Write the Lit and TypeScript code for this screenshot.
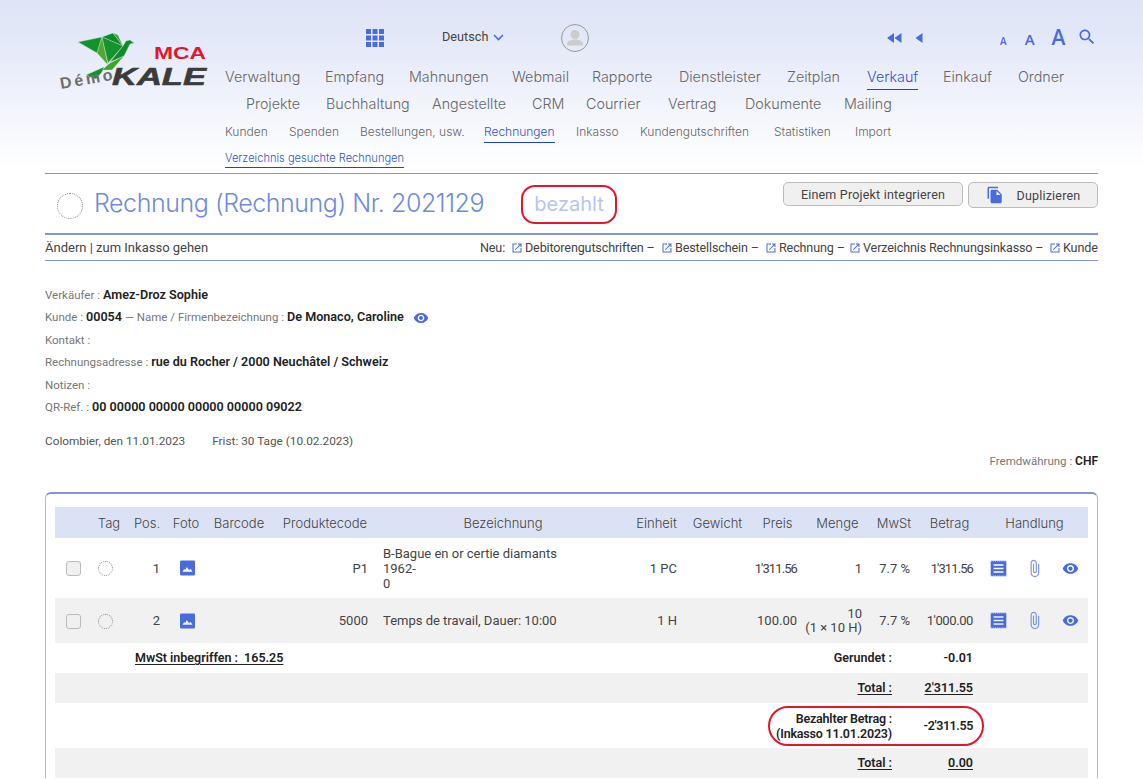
import { LitElement, html, css, svg } from 'lit';
import { customElement } from 'lit/decorators.js';

const mainRow1 = [
  ['Verwaltung', 100], ['Empfang', 84], ['Mahnungen', 103], ['Webmail', 80], ['Rapporte', 87],
  ['Dienstleister', 108], ['Zeitplan', 80], ['Verkauf', 76], ['Einkauf', 75], ['Ordner', 48],
] as const;
const mainRow2 = [
  ['Projekte', 80], ['Buchhaltung', 106], ['Angestellte', 100], ['CRM', 54], ['Courrier', 82],
  ['Vertrag', 77], ['Dokumente', 99], ['Mailing', 47],
] as const;
const subRow = [
  ['Kunden', 64], ['Spenden', 71], ['Bestellungen, usw.', 124], ['Rechnungen', 92], ['Inkasso', 64],
  ['Kundengutschriften', 134], ['Statistiken', 81], ['Import', 37],
] as const;
const newLinks = [
  ['Debitorengutschriften –', 150], ['Bestellschein –', 104], ['Rechnung –', 84],
  ['Verzeichnis Rechnungsinkasso –', 200], ['Kunde', 49],
] as const;
const heads = ['', 'Tag', 'Pos.', 'Foto', 'Barcode', 'Produktecode', 'Bezeichnung', 'Einheit', 'Gewicht', 'Preis', 'Menge', 'MwSt', 'Betrag', 'Handlung'];
const colWidths = [35, 38, 38, 40, 66, 106, 250, 57, 65, 55, 65, 48, 63, 107];

const icon = (path: unknown, cls = 'ic') => html`<svg class=${cls} viewBox="0 0 24 24" fill="currentColor">${path}</svg>`;
const eye = svg`<path d="M12 4.5C7 4.5 2.73 7.61 1 12c1.73 4.39 6 7.5 11 7.5s9.27-3.11 11-7.5c-1.73-4.39-6-7.5-11-7.5zM12 17c-2.76 0-5-2.24-5-5s2.24-5 5-5 5 2.24 5 5-2.24 5-5 5zm0-8c-1.66 0-3 1.34-3 3s1.34 3 3 3 3-1.34 3-3-1.34-3-3-3z"/>`;
const openNew = svg`<path d="M19 19H5V5h7V3H3v18h18v-9h-2v7zM14 3v2h3.59l-9.83 9.83 1.41 1.41L19 6.41V10h2V3h-7z"/>`;
const clip = svg`<path d="M16.5 6v11.5c0 2.21-1.79 4-4 4s-4-1.79-4-4V5c0-1.38 1.12-2.5 2.5-2.5s2.5 1.12 2.5 2.5v10.5c0 .55-.45 1-1 1s-1-.45-1-1V6H10v9.5c0 1.38 1.12 2.5 2.5 2.5s2.5-1.12 2.5-2.5V5c0-2.21-1.79-4-4-4S7 2.79 7 5v12.5c0 3.04 2.46 5.5 5.5 5.5s5.5-2.46 5.5-5.5V6h-1.5z"/>`;
const search = svg`<path d="M15.5 14h-.79l-.28-.27C15.41 12.59 16 11.11 16 9.5 16 5.91 13.09 3 9.5 3S3 5.91 3 9.5 5.91 16 9.5 16c1.61 0 3.09-.59 4.23-1.57l.27.28v.79l5 4.99L20.49 19l-4.99-5zm-6 0C7.01 14 5 11.99 5 9.5S7.01 5 9.5 5 14 7.01 14 9.5 11.99 14 9.5 14z"/>`;
const copy = svg`<path d="M16 1H4c-1.1 0-2 .9-2 2v14h2V3h12V1zm-1 4l6 6v10c0 1.1-.9 2-2 2H7.99C6.89 23 6 22.1 6 21l.01-14c0-1.1.89-2 1.99-2h7zm-1 7h5.5L14 6.5V12z"/>`;
const photo = svg`<path fill-rule="evenodd" d="M2 0h20a2 2 0 0 1 2 2v20a2 2 0 0 1-2 2H2a2 2 0 0 1-2-2V2a2 2 0 0 1 2-2zM4 18h16l-3.2-5-2.3 2.6L11 10.5 8.2 15l-1.4-1.6z"/>`;
const doc = svg`<path fill-rule="evenodd" d="M1 1h22v22H1zM5 6v2h14V6zm0 5v2h14v-2zm0 5v2h14v-2z"/><path d="M1 1.5H23M1 22.500H23" stroke="#fff" stroke-width="1" stroke-dasharray="1.500 1.500"/>`;

@customElement('app-root')
export class AppRoot extends LitElement {
  static styles = css`
    :host {
      display: block;
      height: 779px;
      overflow: hidden;
      background: #fff;
      font-family: Roboto, "Liberation Sans", sans-serif;
      font-size: 13px;
      color: #444;
    }
    .head {
      display: grid;
      grid-template-columns: 225px 1fr;
      height: 173px;
      background: linear-gradient(#dfe5f7 0, #e2e7f8 30px, #fff 168px);
    }
    .logo { width: 170px; height: 90px; margin: 20px 0 0 50px; }
    .logo text { font-family: "Liberation Sans", sans-serif; font-weight: 700; }

    .tools { display: flex; align-items: center; height: 28px; margin-top: 24px; color: #4a6bdc; }
    .apps { width: 18px; height: 18px; margin-left: 141px; }
    .lang { display: flex; align-items: center; gap: 5px; width: 119px; margin: -4px 0 0 58px; color: #444; font-size: 12.7px; }
    .lang svg { width: 11px; height: 7px; margin-top: 2px; color: #4a6bdc; }
    .avatar { width: 28px; height: 28px; }
    .rewind { display: flex; gap: 13px; margin-left: 298px; width: 113px; }
    .rewind svg { height: 10px; }
    .sizes { display: flex; align-items: baseline; gap: 18px; margin-top: 2px; font-family: "Open Sans", sans-serif; font-weight: 600; line-height: 28px; }
    .sizes span:nth-child(1) { font-size: 10px; }
    .sizes span:nth-child(2) { font-size: 15px; }
    .sizes span:nth-child(3) { font-size: 21px; margin-left: -1px; }
    .sizes svg { width: 20px; height: 20px; align-self: center; margin: -4px 0 0 -6px; }

    .row { display: flex; font-family: Inter, sans-serif; font-weight: 300; color: #666; white-space: nowrap; }
    .row a { display: block; flex: none; }
    .row b { display: inline-block; box-sizing: border-box; padding-top: 1px; font-weight: inherit; }
    .main { font-size: 14.3px; line-height: 24px; height: 26px; margin-top: 12px; }
    .main + .main { margin-top: 1px; padding-left: 21px; }
    .main a.on b { height: 26px; border-bottom: 1px solid #1f45d0; color: #3452cf; }
    .sub { font-size: 12px; line-height: 24px; height: 24px; margin-top: 2px; }
    .sub a.on b { height: 24px; border-bottom: 1px solid #1f45d0; color: #3452cf; }
    .sub.third { margin-top: 3px; height: 22px; font-size: 11.1px; }
    .sub.third a b { width: 179px; height: 22px; padding-top: 0; }

    .content { padding: 0 45px; }
    .title {
      display: flex;
      align-items: flex-start;
      height: 59px;
      border-top: 1px solid #7f95dd;
      border-bottom: 2px solid #7f95dd;
    }
    .dot { flex: none; width: 24px; height: 24px; margin: 19px 0 0 12px; border: 1px dotted #888; border-radius: 50%; }
    .title h1 {
      flex: none;
      width: 427px;
      margin: 0 0 0 11px;
      font: 300 25px/58px Inter, sans-serif;
      letter-spacing: -.45px;
      color: #6f8ae0;
      white-space: nowrap;
    }
    .status {
      flex: none;
      box-sizing: border-box;
      width: 96px;
      height: 39px;
      margin-top: 11px;
      border: 2px solid #e3172b;
      border-radius: 14px;
      font: 400 20px/35px Inter, sans-serif;
      text-align: center;
      color: #b9c4ef;
    }
    .btns { display: flex; gap: 5px; margin-left: auto; margin-top: 8px; }
    .btn {
      display: flex;
      align-items: center;
      justify-content: center;
      box-sizing: border-box;
      height: 24px;
      border: 1px solid #bbb;
      border-radius: 5px;
      background: #f0f0f0;
      font-size: 12.5px;
      letter-spacing: .2px;
      color: #444;
    }
    .btn.project { width: 180px; }
    .btn.dup { width: 130px; height: 26px; gap: 13px; }
    .btn.dup svg { width: 18px; height: 18px; color: #4a6bdc; }

    .actions {
      display: flex;
      height: 25px;
      line-height: 25px;
      border-bottom: 1px solid #7f95dd;
      white-space: nowrap;
      overflow: hidden;
    }
    .actions .left { flex: none; width: 435px; }
    .actions .links { display: flex; font-size: 12.6px; letter-spacing: -.15px; }
    .actions .new { flex: none; width: 30px; }
    .actions .link { flex: none; display: flex; align-items: center; gap: 2px; }
    .ext { flex: none; width: 12px; height: 12px; color: #4a6bdc; margin-left: 1px; }

    .info { padding-top: 23px; }
    .info div { height: 22.4px; line-height: 22.4px; font-size: 11.5px; color: #777; white-space: nowrap; display: flex; gap: 3px; align-items: center; }
    .info strong { font-size: 12.6px; font-weight: 600; color: #222; }
    .info svg { width: 16px; height: 16px; margin-left: 6px; color: #4a6bdc; }
    .dates { display: flex; gap: 27px; margin-top: 12px; height: 22px; line-height: 22px; color: #555; font-size: 11.8px; }
    .currency { height: 18px; line-height: 18px; text-align: right; font-size: 11.5px; color: #777; }
    .currency strong { font-size: 12px; font-weight: 600; color: #222; }

    .card {
      position: relative;
      margin-top: 22px;
      padding: 13px 9px 0;
      border: 1px solid #bbb;
      border-top: 2px solid #7f95dd;
      border-bottom: 0;
      border-radius: 6px 6px 0 0;
    }
    table { width: 1033px; table-layout: fixed; border-collapse: collapse; }
    th {
      height: 31px;
      padding: 0;
      background: #dce2f5;
      font: 300 13px Inter, sans-serif;
      color: #444;
      white-space: nowrap;
    }
    td { padding: 0; color: #444; white-space: nowrap; }
    .r { text-align: right; padding-right: 8px; }
    .code { padding-right: 10px; }
    .pos { padding-right: 6px; }
    .tight { letter-spacing: -.9px; }
    .tight2 { letter-spacing: -.4px; }
    .l { padding-left: 5px; line-height: 15px; }
    tr.first td { height: 60px; }
    tr.second td { height: 45px; }
    tr.grey td { background: #f1f1f1; }
    .two { line-height: 14px; }
    .box { display: inline-block; vertical-align: middle; width: 15px; height: 15px; margin-left: 11px; box-sizing: border-box; border: 1px solid #bbb; border-radius: 3px; background: #f0f0f0; }
    .tag { display: inline-block; vertical-align: middle; width: 13px; height: 13px; margin-left: 8px; border: 1px dotted #888; border-radius: 50%; }
    .photo { display: block; width: 15px; height: 16px; margin: 0 0 0 14px; color: #4a6bdc; }
    .acts { display: flex; align-items: center; color: #4a6bdc; padding-left: 9px; }
    .acts svg { flex: none; width: 17px; height: 17px; }
    .acts svg:nth-child(2) { width: 19px; height: 19px; margin-left: 18px; color: #7f95dd; }
    .acts svg:nth-child(3) { margin-left: 18px; }
    tr.sum td { box-sizing: border-box; height: 30px; padding-bottom: 2px; font-weight: 600; font-size: 12.5px; color: #222; }
    tr.sum.tall td { height: 45px; padding-bottom: 0; line-height: 15px; }
    tr.sum .lab { padding-right: 26px; text-align: right; }
    tr.sum.tall .lab { letter-spacing: -.2px; }
    tr.sum .vat { padding-left: 7px; }
    u { text-underline-offset: 2px; }
    .ring {
      position: absolute;
      left: 722px;
      top: 212px;
      width: 216px;
      height: 40px;
      box-sizing: border-box;
      border: 2px solid #e3172b;
      border-radius: 20px;
    }
  `;

  private navRow(items: readonly (readonly [string, number])[], cls: string, active: string) {
    return html`<div class="row ${cls}">
      ${items.map(([label, w]) => html`<a class=${label === active ? 'on' : ''} style="width:${w}px"><b>${label}</b></a>`)}
    </div>`;
  }

  private logo() {
    return html`<svg class="logo" viewBox="0 0 170 90" stroke-linejoin="round">
      <g stroke="#cfe8cf" stroke-width=".35">
        <polygon points="28,22 52,17 47,33" fill="#12922f" />
        <polygon points="52,17 47,33 58,45" fill="#4fa82f" />
        <polygon points="52,17 63,13 73,26" fill="#0d8a2c" />
        <polygon points="52,17 73,26 58,43" fill="#14932f" />
        <polygon points="63,13 68,15 73,26" fill="#3fa232" />
        <polygon points="73,26 76,21 80,20 84,23 80,24 74,36 60,42" fill="#0f8a2e" />
        <polygon points="60,43 74,36 62,50 52,50" fill="#3fa232" />
        <polygon points="36,55 54,47 52,52 46,59" fill="#12922f" />
      </g>
      <text x="104" y="39" font-size="17" fill="#e3172b" textLength="52" lengthAdjust="spacingAndGlyphs">MCA</text>
      <text x="62" y="65" font-size="24" fill="#3b3b3b" font-style="italic" textLength="94" lengthAdjust="spacingAndGlyphs" stroke="#3b3b3b" stroke-width=".6">KALE</text>
      <text x="11" y="69" font-size="16" fill="#6e6e6e" transform="rotate(-10 11 69)" textLength="53" lengthAdjust="spacing">Démo</text>
    </svg>`;
  }

  private sumRow(cls: string, vat: unknown, label: unknown, value: unknown) {
    return html`<tr class="sum ${cls}">
      <td colspan="2"></td>
      <td colspan="5" class="vat">${vat}</td>
      <td colspan="5" class="lab">${label}</td>
      <td class="r">${value}</td>
      <td></td>
    </tr>`;
  }

  render() {
    return html`
      <header class="head">
        ${this.logo()}
        <div>
          <div class="tools">
            <svg class="apps" viewBox="0 0 18 18" fill="currentColor">
              ${[0, 6.5, 13].flatMap((y) => [0, 6.5, 13].map((x) => svg`<rect x=${x} y=${y} width="5" height="5" />`))}
            </svg>
            <div class="lang">Deutsch
              <svg viewBox="0 0 11 7" fill="none" stroke="currentColor" stroke-width="1.6"><path d="M1 1l4.5 4.5L10 1" /></svg>
            </div>
            <svg class="avatar" viewBox="0 0 28 28">
              <circle cx="14" cy="14" r="13.5" fill="none" stroke="#999" />
              <circle cx="14" cy="10.500" r="4.500" fill="#ccc" />
              <path d="M6 20c0-3 4-4.500 8-4.500s8 1.500 8 4.500v1.500H6z" fill="#ccc" />
            </svg>
            <div class="rewind">
              <svg width="15" viewBox="0 0 15 10" fill="currentColor"><path d="M7 0v10L0 5zM14.500 0v10l-7-5z" /></svg>
              <svg width="8" viewBox="0 0 8 10" fill="currentColor"><path d="M7.500 0v10L.5 5z" /></svg>
            </div>
            <div class="sizes"><span>A</span><span>A</span><span>A</span>${icon(search)}</div>
          </div>
          ${this.navRow(mainRow1, 'main', 'Verkauf')}
          ${this.navRow(mainRow2, 'main', '')}
          ${this.navRow(subRow, 'sub', 'Rechnungen')}
          ${this.navRow([['Verzeichnis gesuchte Rechnungen', 179]], 'sub third', 'Verzeichnis gesuchte Rechnungen')}
        </div>
      </header>

      <main class="content">
        <section class="title">
          <span class="dot"></span>
          <h1>Rechnung (Rechnung) Nr. 2021129</h1>
          <span class="status">bezahlt</span>
          <div class="btns">
            <div class="btn project">Einem Projekt integrieren</div>
            <div class="btn dup">${icon(copy)}Duplizieren</div>
          </div>
        </section>

        <nav class="actions">
          <div class="left">Ändern | zum Inkasso gehen</div>
          <div class="links">
            <span class="new">Neu:</span>
            ${newLinks.map(([label, w]) => html`<span class="link" style="width:${w}px">${icon(openNew, 'ext')}${label}</span>`)}
          </div>
        </nav>

        <section class="info">
          <div>Verkäufer : <strong>Amez-Droz Sophie</strong></div>
          <div>Kunde : <strong>00054</strong> — Name / Firmenbezeichnung : <strong>De Monaco, Caroline</strong>${icon(eye)}</div>
          <div>Kontakt :</div>
          <div>Rechnungsadresse : <strong>rue du Rocher / 2000 Neuchâtel / Schweiz</strong></div>
          <div>Notizen :</div>
          <div>QR-Ref. : <strong>00 00000 00000 00000 00000 09022</strong></div>
        </section>
        <div class="dates"><span>Colombier, den 11.01.2023</span><span>Frist: 30 Tage (10.02.2023)</span></div>
        <div class="currency">Fremdwährung : <strong>CHF</strong></div>

        <section class="card">
          <table>
            <colgroup>${colWidths.map((w) => html`<col style="width:${w}px" />`)}</colgroup>
            <thead><tr>${heads.map((h) => html`<th>${h}</th>`)}</tr></thead>
            <tbody>
              <tr class="first">
                <td><span class="box"></span></td>
                <td><span class="tag"></span></td>
                <td class="r pos">1</td>
                <td>${icon(photo, 'photo')}</td>
                <td></td>
                <td class="r code">P1</td>
                <td class="l">B-Bague en or certie diamants<br />1962-<br />0</td>
                <td class="r">1 PC</td>
                <td></td>
                <td class="r tight">1'311.56</td>
                <td class="r">1</td>
                <td class="r">7.7 %</td>
                <td class="r tight">1'311.56</td>
                <td><div class="acts">${icon(doc)}${icon(clip)}${icon(eye)}</div></td>
              </tr>
              <tr class="second grey">
                <td><span class="box"></span></td>
                <td><span class="tag"></span></td>
                <td class="r pos">2</td>
                <td>${icon(photo, 'photo')}</td>
                <td></td>
                <td class="r code">5000</td>
                <td class="l">Temps de travail, Dauer: 10:00</td>
                <td class="r">1 H</td>
                <td></td>
                <td class="r">100.00</td>
                <td class="r two">10<br />(1 × 10 H)</td>
                <td class="r">7.7 %</td>
                <td class="r tight2">1'000.00</td>
                <td><div class="acts">${icon(doc)}${icon(clip)}${icon(eye)}</div></td>
              </tr>
              ${this.sumRow('', html`<u>MwSt inbegriffen : &nbsp;165.25</u>`, 'Gerundet :', '-0.01')}
              ${this.sumRow('grey', '', html`<u>Total :</u>`, html`<u>2'311.55</u>`)}
              ${this.sumRow('tall', '', html`Bezahlter Betrag :<br />(Inkasso 11.01.2023)`, html`<span class="tight2">-2'311.55</span>`)}
              ${this.sumRow('grey', '', html`<u>Total :</u>`, html`<u>0.00</u>`)}
            </tbody>
          </table>
          <div class="ring"></div>
        </section>
      </main>
    `;
  }
}
